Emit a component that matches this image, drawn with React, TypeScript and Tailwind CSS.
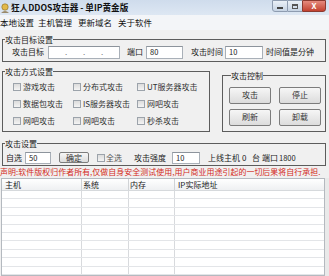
import React from 'react';

function Check({ label }: { label: string }) {
  return (
    <div className="flex items-center h-[17px]">
      <span className="w-[8px] h-[8px] border border-[#9ca3ab] bg-linear-to-b from-[#dcdcdc] to-[#f4f4f4]" />
      <span className="ml-[2px] text-[#333]">{label}</span>
    </div>
  );
}

function Input({ value, className }: { value?: string; className: string }) {
  return (
    <div className={`bg-white border border-[#a9b0b8] border-t-[#8d949c] flex items-center px-[3px] text-[7.5px] ${className}`}>
      {value}
    </div>
  );
}

function Btn({ label, className }: { label: string; className: string }) {
  return (
    <div className={`border border-[#7c7c7c] rounded-[2px] bg-linear-to-b from-[#f6f6f6] to-[#dcdcdc] flex items-center justify-center text-[#333] ${className}`}>
      {label}
    </div>
  );
}

export default function App() {
  return (
    <div className="w-[329px] h-[276px] overflow-hidden bg-[#f0f0f0] text-[#222] font-['Noto_Sans_CJK_SC',sans-serif] text-[8px] leading-none flex flex-col">
      {/* Title bar */}
      <div className="h-[16px] flex items-start bg-linear-to-b from-[#cfdcec] to-[#dde7f3]">
        <svg width="10" height="10" viewBox="0 0 10 10" className="mt-[3px]">
          <circle cx="5" cy="4" r="3.2" fill="#e2b94a" stroke="#8a6a20" strokeWidth="0.6" />
          <path d="M1 10 Q5 6 9 10 Z" fill="#9a8a6a" />
        </svg>
        <span className="ml-[1px] mt-[3px] font-bold text-[8.6px] text-[#111]">狂人DDOS攻击器 - 单IP黄金版</span>
        <div className="ml-auto mr-[3px] flex h-[12px]">
          <div className="w-[16px] border border-[#8e9cb0] rounded-bl-[3px] bg-linear-to-b from-[#eaf0f7] to-[#c6d3e3] flex items-center justify-center">
            <span className="w-[6px] h-[2px] bg-[#444] mt-[3px]" />
          </div>
          <div className="w-[14px] border-y border-[#8e9cb0] bg-linear-to-b from-[#eaf0f7] to-[#c6d3e3] flex items-center justify-center">
            <span className="w-[6px] h-[5px] border border-[#555] border-t-2" />
          </div>
          <div className="w-[24px] border border-[#8c3a30] rounded-br-[3px] bg-linear-to-b from-[#e58a7e] to-[#c2402f] flex items-center justify-center text-white font-bold text-[8px]">
            X
          </div>
        </div>
      </div>

      {/* Menu bar */}
      <div className="h-[15px] flex items-center bg-[#f3f5f8] text-[#111] text-[8.5px]">
        <span className="w-[38px]">本地设置</span>
        <span className="w-[40px]">主机管理</span>
        <span className="w-[40px]">更新域名</span>
        <span>关于软件</span>
      </div>

      {/* 攻击目标设置 */}
      <fieldset className="mt-[4px] ml-[2px] w-[324px] border border-[#5c5c5c] px-0 pb-[2px]">
        <legend className="ml-[2px] leading-[11px]">攻击目标设置</legend>
        <div className="mt-[1px] h-[13px] flex items-center">
          <span className="ml-[9px] w-[36px]">攻击目标</span>
          <div className="w-[72px] h-[13px] bg-white border border-[#a9b0b8] border-t-[#8d949c] flex items-center justify-around px-[8px] text-[#777]">
            <span>.</span>
            <span>.</span>
            <span>.</span>
          </div>
          <span className="ml-[7px] w-[19px]">端口</span>
          <Input value="80" className="w-[37px] h-[13px]" />
          <span className="ml-[8px] w-[34px]">攻击时间</span>
          <Input value="10" className="w-[38px] h-[13px]" />
          <span className="ml-[3px]">时间值是分钟</span>
        </div>
      </fieldset>

      {/* 攻击方式设置 + 攻击控制 */}
      <div className="flex items-start mt-[4px]">
        <fieldset className="ml-[2px] w-[208px] border border-[#5c5c5c] pt-[2px] pb-[1px]">
          <legend className="ml-[2px] leading-[11px]">攻击方式设置</legend>
          <div className="grid grid-cols-[60px_64px_1fr] pl-[10px]">
            <Check label="游戏攻击" />
            <Check label="分布式攻击" />
            <Check label="UT服务器攻击" />
            <Check label="数据包攻击" />
            <Check label="IS服务器攻击" />
            <Check label="网吧攻击" />
            <Check label="网吧攻击" />
            <Check label="网吧攻击" />
            <Check label="秒杀攻击" />
          </div>
        </fieldset>
        <fieldset className="ml-[12px] mt-[4px] w-[104px] border border-[#5c5c5c] pt-[6px] pb-[5px] pl-[6px]">
          <legend className="ml-[2px] leading-[11px]">攻击控制</legend>
          <div className="grid grid-cols-[42px_42px] gap-x-[8px] gap-y-[5px]">
            <Btn label="攻击" className="h-[17px]" />
            <Btn label="停止" className="h-[17px]" />
            <Btn label="刷新" className="h-[17px]" />
            <Btn label="卸载" className="h-[17px]" />
          </div>
        </fieldset>
      </div>

      {/* 攻击设置 */}
      <fieldset className="mt-[6px] ml-[2px] w-[324px] border border-[#5c5c5c] pt-[3px] pb-[1px]">
        <legend className="ml-[2px] leading-[11px]">攻击设置</legend>
        <div className="h-[12px] flex items-center">
          <span className="ml-[3px] w-[19px]">自选</span>
          <Input value="50" className="w-[26px] h-[12px]" />
          <Btn label="确定" className="ml-[8px] w-[30px] h-[11px]" />
          <span className="ml-[8px] w-[8px] h-[8px] border border-[#9ca3ab] bg-linear-to-b from-[#dcdcdc] to-[#f4f4f4]" />
          <span className="ml-[1px] w-[28px] text-[#555]">全选</span>
          <span className="w-[38px]">攻击强度</span>
          <Input value="10" className="w-[28px] h-[12px]" />
          <span className="ml-[8px] w-[34px]">上线主机</span>
          <span className="w-[10px]">0</span>
          <span className="w-[10px]">台</span>
          <span className="w-[17px]">端口</span>
          <span className="text-[7.5px]">1800</span>
        </div>
      </fieldset>

      {/* 声明 */}
      <div className="mt-[1px] h-[11px] flex items-center whitespace-nowrap text-[#d42a22] text-[7.95px] tracking-[0.05px]">
        声明:软件版权归作者所有,仅做自身安全测试使用,用户商业用途引起的一切后果将自行承担.
      </div>

      {/* Host table */}
      <div className="mt-[1px] flex flex-1">
        <div className="ml-[1px] w-[324px] bg-white border border-[#b4b9bf] flex flex-col">
          <div className="h-[12px] grid grid-cols-[80px_47px_46px_1fr] bg-linear-to-b from-white to-[#eef0f2] border-b border-[#d6d9dc]">
            <span className="pl-[3px] flex items-center border-r border-[#d0d3d6]">主机</span>
            <span className="pl-[1px] flex items-center border-r border-[#d0d3d6]">系统</span>
            <span className="pl-[1px] flex items-center border-r border-[#d0d3d6]">内存</span>
            <span className="pl-[3px] flex items-center">IP实际地址</span>
          </div>
          {Array.from({ length: 10 }).map((_, i) => (
            <div key={i} className="h-[8.4px] grid grid-cols-[80px_47px_46px_1fr] border-b border-[#e3e5e8]">
              <span className="border-r border-[#d8dadd]" />
              <span className="border-r border-[#d8dadd]" />
              <span className="border-r border-[#d8dadd]" />
              <span />
            </div>
          ))}
        </div>
        <div className="flex-1 bg-[#e9e9e9]" />
      </div>
    </div>
  );
}
